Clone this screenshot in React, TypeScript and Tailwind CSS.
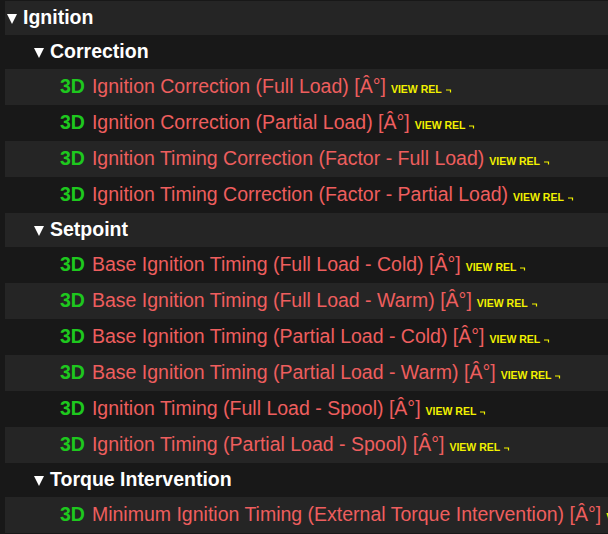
import React from "react";

type Row =
  | { kind: "group"; label: string; depth: number }
  | { kind: "map"; label: string };

const rows: Row[] = [
  { kind: "group", label: "Ignition", depth: 0 },
  { kind: "group", label: "Correction", depth: 1 },
  { kind: "map", label: "Ignition Correction (Full Load) [Â°]" },
  { kind: "map", label: "Ignition Correction (Partial Load) [Â°]" },
  { kind: "map", label: "Ignition Timing Correction (Factor - Full Load)" },
  { kind: "map", label: "Ignition Timing Correction (Factor - Partial Load)" },
  { kind: "group", label: "Setpoint", depth: 1 },
  { kind: "map", label: "Base Ignition Timing (Full Load - Cold) [Â°]" },
  { kind: "map", label: "Base Ignition Timing (Full Load - Warm) [Â°]" },
  { kind: "map", label: "Base Ignition Timing (Partial Load - Cold) [Â°]" },
  { kind: "map", label: "Base Ignition Timing (Partial Load - Warm) [Â°]" },
  { kind: "map", label: "Ignition Timing (Full Load - Spool) [Â°]" },
  { kind: "map", label: "Ignition Timing (Partial Load - Spool) [Â°]" },
  { kind: "group", label: "Torque Intervention", depth: 1 },
  { kind: "map", label: "Minimum Ignition Timing (External Torque Intervention) [Â°]" },
];

function Caret() {
  return (
    <svg width="10" height="10" viewBox="0 0 10 10" className="mt-[2px] shrink-0">
      <path d="M0 0 H10 L5 10 Z" fill="#ffffff" />
    </svg>
  );
}

function ViewRel() {
  return (
    <span className="ml-[5px] inline-flex items-baseline gap-[4px] text-[10.5px] font-bold text-[#f2f200]">
      VIEW REL
      <svg width="6" height="4" viewBox="0 0 6 4">
        <path d="M0 1 H4.5 V3.5" stroke="#f2f200" strokeWidth="1.2" fill="none" />
      </svg>
    </span>
  );
}

export default function App() {
  return (
    <div
      className="w-[608px] h-[534px] overflow-hidden bg-[#181818] pt-[1px] pl-[5px]"
      style={{ fontFamily: '"Liberation Sans", Arial, sans-serif' }}
    >
      {rows.map((row, i) => {
        const bg = i % 2 === 0 ? "bg-[#252525]" : "bg-[#181818]";
        if (row.kind === "group") {
          return (
            <div
              key={i}
              className={`flex h-[34px] items-center gap-[6px] whitespace-nowrap ${bg} ${
                row.depth === 0 ? "pl-[2px]" : "pl-[29px]"
              }`}
            >
              <Caret />
              <span className="text-[19.5px] font-bold text-white">{row.label}</span>
            </div>
          );
        }
        return (
          <div
            key={i}
            className={`flex h-[36px] items-center overflow-hidden whitespace-nowrap pl-[55px] ${bg}`}
          >
            <span className="flex items-baseline">
              <span className="text-[19.5px] font-bold text-[#1ec81e]">3D</span>
              <span className="ml-[7px] text-[19.5px] text-[#ee5e5e]">{row.label}</span>
              <ViewRel />
            </span>
          </div>
        );
      })}
    </div>
  );
}
